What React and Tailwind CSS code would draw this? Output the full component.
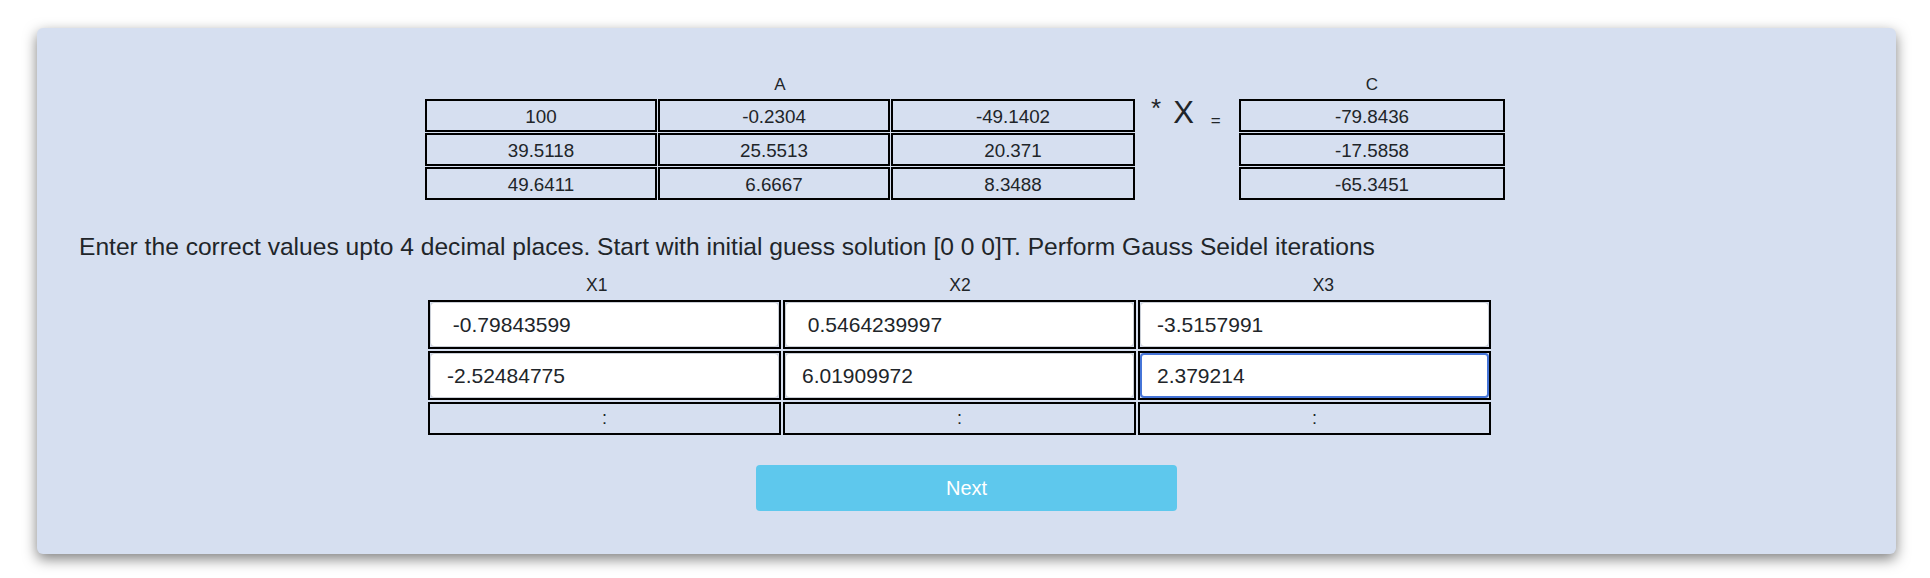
const matrizA = [
  ['100', '-0.2304', '-49.1402'],
  ['39.5118', '25.5513', '20.371'],
  ['49.6411', '6.6667', '8.3488'],
]
const vectorC = ['-79.8436', '-17.5858', '-65.3451']
const iteraciones = [
  [' -0.79843599', ' 0.5464239997', '-3.5157991'],
  ['-2.52484775', '6.01909972', '2.379214'],
]

const Celda = ({ children }) => (
  <div className="h-[33px] border-2 border-black flex items-center justify-center pt-[3px] text-[18.8px]">
    {children}
  </div>
)

export default function App() {
  return (
    <div
      className="min-h-screen bg-white pl-[37px] pt-[28px] pb-6 text-[#212529]"
      style={{ fontFamily: '"Liberation Sans", Arial, sans-serif' }}
    >
      <div className="w-[1859px] h-[526px] rounded-[6px] bg-[#d6dff0] shadow-[0_5px_14px_rgba(0,0,0,0.5)] pt-[47px]">
        {/* A * X = C */}
        <div className="flex justify-center items-start pr-[3px]">
          <div className="w-[710px]">
            <div className="text-center text-[17px] leading-[20px]">A</div>
            <div className="mt-[4px] grid grid-cols-[232px_232px_244px] gap-[1px]">
              {matrizA.flat().map((v, i) => (
                <Celda key={i}>{v}</Celda>
              ))}
            </div>
          </div>
          <div className="w-[104px] flex items-start pl-[16px]">
            <span className="mt-[20px] text-[26px] leading-none">*</span>
            <span className="mt-[22px] ml-[12px] text-[31px] leading-none">X</span>
            <span className="mt-[37px] ml-[17px] text-[17px] leading-none">=</span>
          </div>
          <div className="w-[266px]">
            <div className="text-center text-[17px] leading-[20px]">C</div>
            <div className="mt-[4px] grid grid-cols-1 gap-[1px]">
              {vectorC.map((v) => (
                <Celda key={v}>{v}</Celda>
              ))}
            </div>
          </div>
        </div>

        <p className="mt-[33px] pl-[42px] text-[24.6px] leading-[28px]">
          Enter the correct values upto 4 decimal places. Start with initial guess solution [0 0 0]T. Perform Gauss Seidel iterations
        </p>

        {/* tabla de iteraciones */}
        <div className="mt-[14px] ml-[378px] w-[1090px] grid grid-cols-3 text-center text-[17.5px] leading-[20px]">
          <span>X1</span>
          <span>X2</span>
          <span>X3</span>
        </div>
        <div className="mt-[5px] ml-[391px] grid grid-cols-[353px_353px_353px] gap-[2px]">
          {iteraciones.map((fila, r) =>
            fila.map((v, c) => {
              const activo = r === 1 && c === 2
              return (
                <div key={`${r}-${c}`} className="h-[49px] border-2 border-black">
                  <input
                    readOnly
                    value={v}
                    className={
                      activo
                        ? 'w-full h-full bg-white rounded-[4px] border-2 border-[#4675d8] pl-[15px] text-[21px] whitespace-pre outline-none'
                        : 'w-full h-full bg-white rounded-[4px] border border-[#c9ced6] pl-[16px] text-[21px] whitespace-pre outline-none'
                    }
                  />
                </div>
              )
            })
          )}
          {[0, 1, 2].map((c) => (
            <div key={c} className="h-[33px] border-2 border-black flex items-center justify-center text-[18px]">
              :
            </div>
          ))}
        </div>

        <button className="mt-[30px] mx-auto block w-[421px] h-[46px] rounded-[4px] bg-[#5ec8ed] text-white text-[20px]">
          Next
        </button>
      </div>
    </div>
  )
}
